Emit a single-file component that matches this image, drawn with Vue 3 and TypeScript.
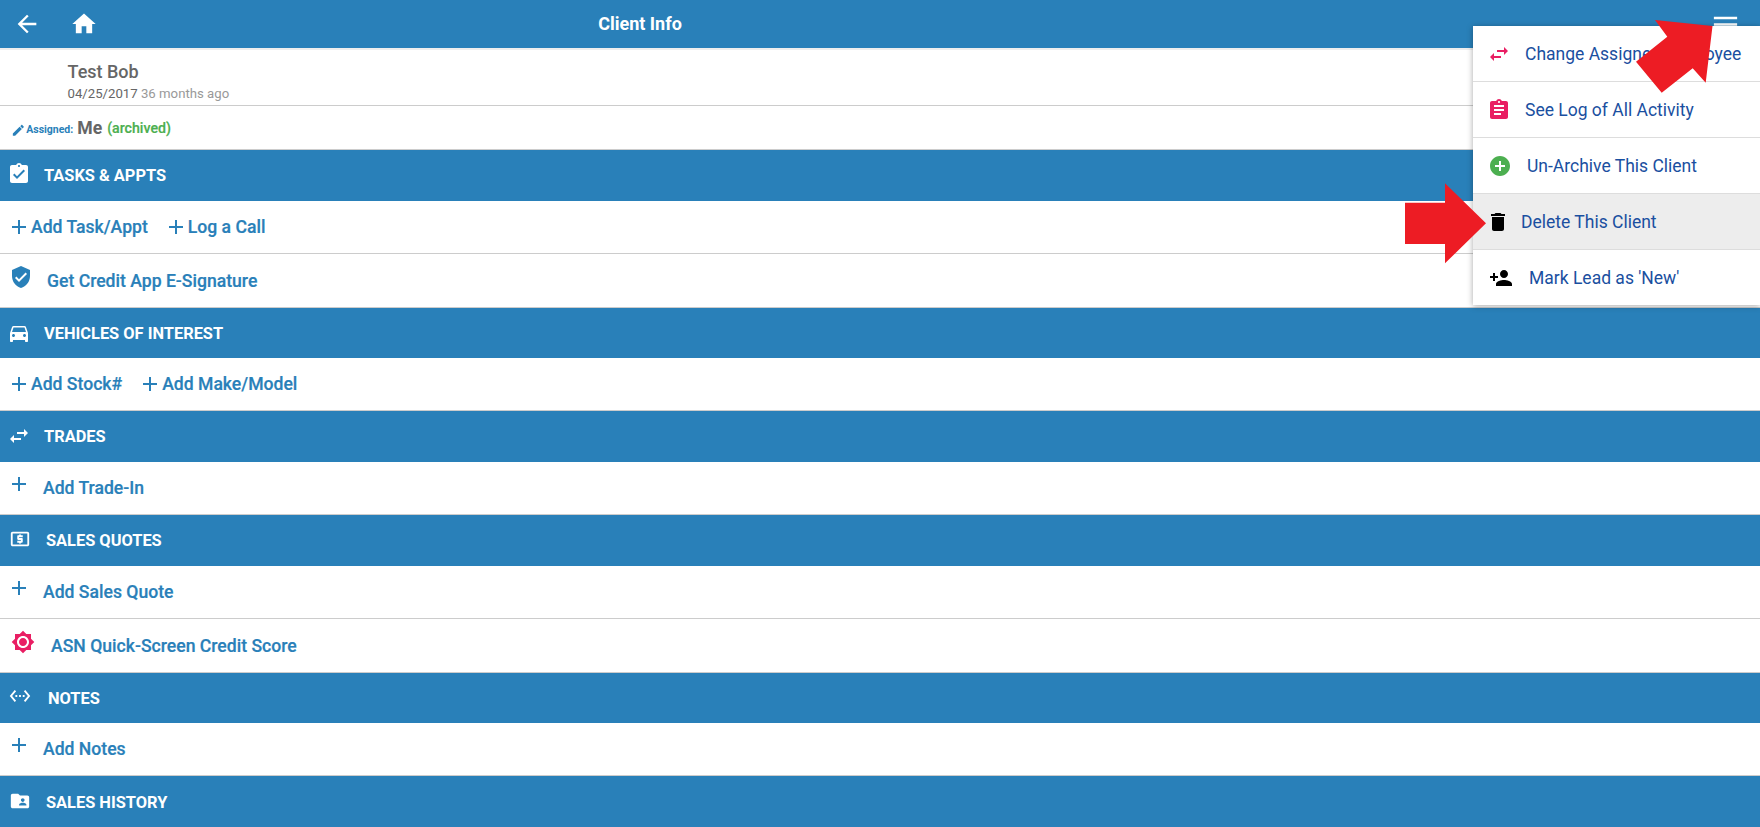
<script setup lang="ts">
const P = {
  back: 'M20 11H7.83l5.59-5.59L12 4l-8 8 8 8 1.41-1.41L7.83 13H20v-2z',
  home: 'M10 20v-6h4v6h5v-8h3L12 3 2 12h3v8z',
  menu: 'M3 18h18v-2H3v2zm0-5h18v-2H3v2zm0-7v2h18V6H3z',
  edit: 'M3 17.25V21h3.75L17.81 9.94l-3.75-3.75L3 17.25zM20.71 7.04c.39-.39.39-1.02 0-1.41l-2.34-2.34c-.39-.39-1.02-.39-1.41 0l-1.83 1.83 3.75 3.75 1.83-1.83z',
  tasks: 'M19 3h-4.18C14.4 1.84 13.3 1 12 1c-1.3 0-2.4.84-2.82 2H5c-1.1 0-2 .9-2 2v14c0 1.1.9 2 2 2h14c1.1 0 2-.9 2-2V5c0-1.1-.9-2-2-2zm-7 0c.55 0 1 .45 1 1s-.45 1-1 1-1-.45-1-1 .45-1 1-1zm-2 14l-4-4 1.41-1.41L10 14.17l6.59-6.59L18 9l-8 8z',
  shield: 'M12 1L3 5v6c0 5.55 3.84 10.74 9 12 5.16-1.26 9-6.45 9-12V5l-9-4zm-2 16l-4-4 1.41-1.41L10 14.17l6.59-6.59L18 9l-8 8z',
  car: 'M18.92 6.01C18.72 5.42 18.16 5 17.5 5h-11c-.66 0-1.21.42-1.42 1.01L3 12v8c0 .55.45 1 1 1h1c.55 0 1-.45 1-1v-1h12v1c0 .55.45 1 1 1h1c.55 0 1-.45 1-1v-8l-2.08-5.99zM6.5 16c-.83 0-1.5-.67-1.5-1.5S5.67 13 6.5 13s1.5.67 1.5 1.5S7.33 16 6.5 16zm11 0c-.83 0-1.5-.67-1.5-1.5s.67-1.5 1.5-1.5 1.5.67 1.5 1.5-.67 1.5-1.5 1.5zM5 11l1.5-4.5h11L19 11H5z',
  swap: 'M6.99 11L3 15l3.99 4v-3H14v-2H6.99v-3zM21 9l-3.99-4v3H10v2h7.01v3L21 9z',
  atm: 'M11 17h2v-1h1c.55 0 1-.45 1-1v-3c0-.55-.45-1-1-1h-3v-1h4V8h-2V7h-2v1h-1c-.55 0-1 .45-1 1v3c0 .55.45 1 1 1h3v1H9v2h2v1zm9-13H4c-1.11 0-1.99.89-1.99 2L2 18c0 1.11.89 2 2 2h16c1.11 0 2-.89 2-2V6c0-1.11-.89-2-2-2zm0 14H4V6h16v12z',
  add: 'M19 13h-6v6h-2v-6H5v-2h6V5h2v6h6v2z',
  score: 'M20 8.69V4h-4.69L12 .69 8.69 4H4v4.69L.69 12 4 15.31V20h4.69L12 23.31 15.31 20H20v-4.69L23.31 12 20 8.69zM12 18c-3.31 0-6-2.69-6-6s2.69-6 6-6 6 2.69 6 6-2.69 6-6 6zm0-10c-2.21 0-4 1.79-4 4s1.79 4 4 4 4-1.79 4-4-1.79-4-4-4z',
  notes: 'M7.77 6.76L6.23 5.48.82 12l5.41 6.52 1.54-1.28L3.42 12l4.35-5.24zM7 13h2v-2H7v2zm10-2h-2v2h2v-2zm-6 2h2v-2h-2v2zm6.77-7.52l-1.54 1.28L20.58 12l-4.35 5.24 1.54 1.28L23.18 12l-5.41-6.52z',
  folder: 'M20 6h-8l-2-2H4c-1.1 0-1.99.9-1.99 2L2 18c0 1.1.9 2 2 2h16c1.1 0 2-.9 2-2V8c0-1.1-.9-2-2-2zm-5 3c1.1 0 2 .9 2 2s-.9 2-2 2-2-.9-2-2 .9-2 2-2zm4 8h-8v-1c0-1.33 2.67-2 4-2s4 .67 4 2v1z',
  log: 'M19 3h-4.18C14.4 1.84 13.3 1 12 1c-1.3 0-2.4.84-2.82 2H5c-1.1 0-2 .9-2 2v14c0 1.1.9 2 2 2h14c1.1 0 2-.9 2-2V5c0-1.1-.9-2-2-2zm-7 0c.55 0 1 .45 1 1s-.45 1-1 1-1-.45-1-1 .45-1 1-1zm2 14H7v-2h7v2zm3-4H7v-2h10v2zm0-4H7V7h10v2z',
  plusCircle: 'M12 2C6.48 2 2 6.48 2 12s4.48 10 10 10 10-4.48 10-10S17.52 2 12 2zm5 11h-4v4h-2v-4H7v-2h4V7h2v4h4v2z',
  trash: 'M6 19c0 1.1.9 2 2 2h8c1.1 0 2-.9 2-2V7H6v12zM19 4h-3.5l-1-1h-5l-1 1H5v2h14V4z',
  person: 'M15 12c2.21 0 4-1.79 4-4s-1.79-4-4-4-4 1.79-4 4 1.79 4 4 4zm-9-2V7H4v3H1v2h3v3h2v-3h3v-2H6zm9 4c-2.67 0-8 1.34-8 4v2h16v-2c0-2.66-5.33-4-8-4z'
}

const menuItems = [
  { icon: P.swap, label: 'Change Assigned Employee', cls: 'pink gap-a' },
  { icon: P.log, label: 'See Log of All Activity', cls: 'pink gap-a' },
  { icon: P.plusCircle, label: 'Un-Archive This Client', cls: 'green gap-b' },
  { icon: P.trash, label: 'Delete This Client', cls: 'dark gap-c active' },
  { icon: P.person, label: "Mark Lead as 'New'", cls: 'dark gap-d' }
]
</script>

<template>
  <div class="page">
    <header class="topbar">
      <svg class="top-icon back" viewBox="0 0 24 24"><path :d="P.back" /></svg>
      <svg class="top-icon home" viewBox="0 0 24 24"><path :d="P.home" /></svg>
      <h1 class="title">Client Info</h1>
      <svg class="burger" viewBox="0 0 24 24"><path :d="P.menu" /></svg>
    </header>

    <div class="client line">
      <div class="name">Test Bob</div>
      <div class="date">04/25/2017 <span class="ago">36 months ago</span></div>
    </div>
    <div class="assigned line">
      <svg class="pencil" viewBox="0 0 24 24"><path :d="P.edit" /></svg>
      <span class="assigned-label">Assigned:</span>
      <span class="me">Me</span>
      <span class="archived">(archived)</span>
    </div>

    <div class="band">
      <svg class="icon up4" viewBox="0 0 24 24"><path :d="P.tasks" /></svg>
      <span class="band-text">TASKS &amp; APPTS</span>
    </div>
    <div class="row line">
      <a class="inline-add"><svg class="icon" viewBox="0 0 24 24"><path :d="P.add" /></svg>Add Task/Appt</a>
      <a class="inline-add"><svg class="icon" viewBox="0 0 24 24"><path :d="P.add" /></svg>Log a Call</a>
    </div>
    <div class="row tall line">
      <svg class="icon raised shifted" viewBox="0 0 24 24"><path :d="P.shield" /></svg>
      <span class="text-credit">Get Credit App E-Signature</span>
    </div>

    <div class="band short">
      <svg class="icon" viewBox="0 0 24 24"><path :d="P.car" /></svg>
      <span class="band-text">VEHICLES OF INTEREST</span>
    </div>
    <div class="row line">
      <a class="inline-add"><svg class="icon" viewBox="0 0 24 24"><path :d="P.add" /></svg>Add Stock#</a>
      <a class="inline-add"><svg class="icon" viewBox="0 0 24 24"><path :d="P.add" /></svg>Add Make/Model</a>
    </div>

    <div class="band">
      <svg class="icon up2" viewBox="0 0 24 24"><path :d="P.swap" /></svg>
      <span class="band-text">TRADES</span>
    </div>
    <div class="row line">
      <svg class="icon raised" viewBox="0 0 24 24"><path :d="P.add" /></svg>
      <span class="text-add">Add Trade-In</span>
    </div>

    <div class="band">
      <svg class="icon compact up4" viewBox="0 0 24 24"><path :d="P.atm" /></svg>
      <span class="band-text wide">SALES QUOTES</span>
    </div>
    <div class="row line">
      <svg class="icon raised" viewBox="0 0 24 24"><path :d="P.add" /></svg>
      <span class="text-add">Add Sales Quote</span>
    </div>
    <div class="row tall line">
      <svg class="icon score raised" viewBox="0 0 24 24"><path :d="P.score" /></svg>
      <span class="text-score">ASN Quick-Screen Credit Score</span>
    </div>

    <div class="band short">
      <svg class="icon compact up4" viewBox="0 0 24 24"><path :d="P.notes" /></svg>
      <span class="band-text widest">NOTES</span>
    </div>
    <div class="row line">
      <svg class="icon raised" viewBox="0 0 24 24"><path :d="P.add" /></svg>
      <span class="text-add">Add Notes</span>
    </div>

    <div class="band last">
      <svg class="icon compact up4" viewBox="0 0 24 24"><path :d="P.folder" /></svg>
      <span class="band-text wide">SALES HISTORY</span>
    </div>

    <nav class="menu">
      <div v-for="item in menuItems" :key="item.label" class="menu-item" :class="item.cls">
        <svg class="menu-icon" viewBox="0 0 24 24"><path :d="item.icon" /></svg>
        <span>{{ item.label }}</span>
      </div>
    </nav>

    <svg class="arrows" viewBox="0 0 1760 827">
      <polygon points="1655,20 1712.5,26 1705.7,82.7 1692.7,68.3 1661.7,92.7 1636,61.7 1667.3,36.7" />
      <polygon points="1405,202.7 1445,202.7 1445,183.3 1486,223.3 1445,263.3 1445,244 1405,244" />
    </svg>
  </div>
</template>

<style>
html, body { margin: 0; overflow: hidden; background: #fff; }
</style>

<style scoped>
.page {
  position: relative;
  width: 1760px;
  height: 827px;
  overflow: hidden;
  background: #fff;
  font-family: Roboto, "Liberation Sans", sans-serif;
  color: #2980b9;
}
svg { fill: currentColor; display: block; flex: none; }

.topbar {
  height: 48px;
  box-sizing: content-box;
  background: #2980b9;
  border-bottom: 2px solid #eee;
  display: flex;
  align-items: center;
  color: #fff;
  padding-left: 13px;
}
.top-icon { width: 28px; height: 28px; }
.home { margin-left: 29px; }
.title {
  margin: 0 0 2px -28px;
  flex: none;
  width: 1140px;
  text-align: center;
  font-size: 18px;
  font-weight: 700;
}
.burger { width: 31px; height: 31px; margin-left: 500px; }

.line { border-bottom: 1px solid #ccc; box-sizing: border-box; }

.client {
  height: 56px;
  padding: 11px 0 0 67.5px;
}
.name { font-size: 18px; font-weight: 500; line-height: 21px; color: #666; }
.date { font-size: 13.2px; line-height: 15px; margin-top: 4px; color: #666; }
.ago { color: #999; }

.assigned {
  height: 44px;
  display: flex;
  align-items: center;
  padding-left: 10.5px;
}
.pencil { width: 14.7px; height: 14.7px; margin-top: 5px; }
.assigned-label { font-size: 10.5px; font-weight: 700; margin: 3px 4px 0 1px; }
.me { font-size: 17.6px; font-weight: 700; color: #666; margin-right: 5px; }
.archived { font-size: 14.2px; font-weight: 500; color: #4caf50; margin-top: 1px; -webkit-text-stroke: 0.2px #4caf50; }

.band {
  height: 51px;
  background: #2980b9;
  color: #fff;
  display: flex;
  align-items: center;
  padding-left: 7px;
  font-size: 16.4px;
  font-weight: 700;
}
.band.short { height: 50px; }
.band.last { height: 53px; }
.band-text { margin-left: 13px; }
.band-text.wide { margin-left: 15px; }
.band-text.widest { margin-left: 17px; }

.icon { width: 24px; height: 24px; }
.raised { margin-bottom: 8px; }
.up2 { margin-bottom: 2px; }
.up4 { margin-bottom: 4px; }
.compact { width: 22px; height: 22px; margin-left: 2px; }
.shifted { margin-left: 2px; }
.score { margin-left: 4px; color: #e91e63; }

.row {
  height: 53px;
  display: flex;
  align-items: center;
  padding-left: 7px;
  font-size: 17.6px;
  font-weight: 500;
  -webkit-text-stroke: 0.2px #2980b9;
}
.row.tall { height: 54px; }
.inline-add { display: flex; align-items: center; margin-right: 16px; }
.text-add { margin-left: 12px; }
.text-credit { margin-left: 14px; }
.text-score { margin-left: 16px; }

.menu {
  position: absolute;
  top: 26px;
  left: 1473px;
  width: 287px;
  background: #fff;
  box-shadow: 0 1px 6px rgba(0, 0, 0, 0.35);
}
.menu-item {
  height: 56px;
  box-sizing: border-box;
  display: flex;
  align-items: center;
  padding-left: 14px;
  font-size: 17.5px;
  color: #1a4fa0;
  border-bottom: 1px solid #ddd;
}
.menu-item:last-child { height: 55px; border-bottom: 0; }
.menu-icon { width: 24px; height: 24px; }
.pink .menu-icon { color: #e91e63; }
.green .menu-icon { color: #4caf50; }
.dark .menu-icon { color: #000; }
.gap-a { gap: 14px; }
.gap-b { gap: 15px; }
.gap-b .menu-icon { margin-left: 1px; }
.gap-c { gap: 11px; }
.gap-c .menu-icon { margin-left: -1px; }
.gap-d { gap: 16px; }
.gap-d .menu-icon { margin-left: 2px; }
.active { background: #ededed; }

.arrows {
  position: absolute;
  inset: 0;
  width: 1760px;
  height: 827px;
  fill: #ed1c24;
  pointer-events: none;
}
</style>
